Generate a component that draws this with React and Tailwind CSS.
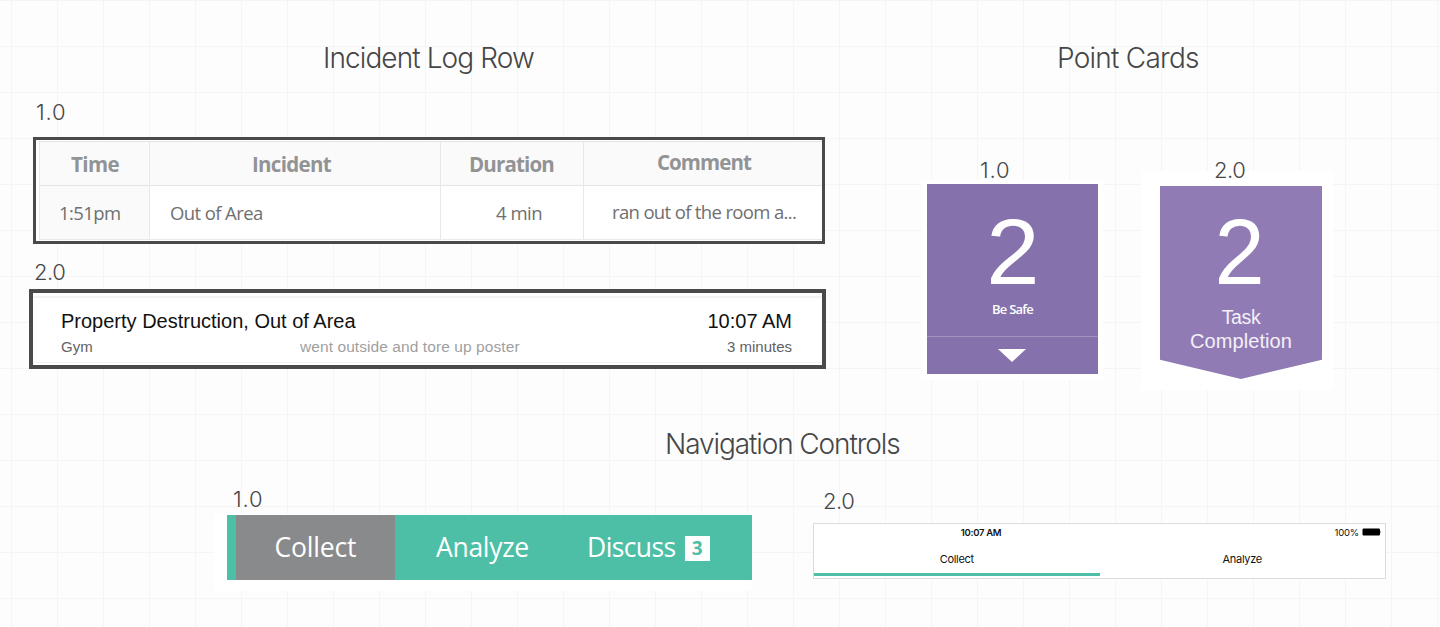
import { clsx } from "clsx";

function Title({ className, children }) {
  return (
    <h2 className={clsx("h-10 whitespace-nowrap font-['Inter',sans-serif] text-[28px] font-[350] leading-10 text-[#464647]", className)}>
      {children}
    </h2>
  );
}

function Version({ className, children }) {
  return (
    <p className={clsx("relative z-10 h-6 whitespace-nowrap font-['Inter',sans-serif] text-[22px] font-[350] leading-6 text-[#464647]", className)}>
      {children}
    </p>
  );
}

function HeaderCell({ className, children }) {
  return <div className={clsx("border-l border-[#e8e8e9] pt-px leading-[43px]", className)}>{children}</div>;
}

function IncidentTable() {
  return (
    <div className="ml-[33px] mt-[5px] h-[107px] w-[792px] border-[3px] border-[#4a4a4a] bg-white pl-[3px] pt-px font-['Open_Sans',sans-serif]">
      <div className="grid h-[45px] grid-cols-[110px_291px_143px_239px] whitespace-nowrap border-y border-[#e4e4e5] bg-[#fafafa] text-[20.5px] font-bold text-[#929395]">
        <HeaderCell className="pl-[31px] tracking-[-0.6px]">Time</HeaderCell>
        <HeaderCell className="pl-[102px] tracking-[-0.7px]">Incident</HeaderCell>
        <HeaderCell className="pl-[28px] tracking-[-0.85px]">Duration</HeaderCell>
        <HeaderCell className="pl-[73px] tracking-[-0.95px]">
          <span className="-mt-[2px] block">Comment</span>
        </HeaderCell>
      </div>
      <div className="grid h-[54px] grid-cols-[110px_291px_143px_239px] whitespace-nowrap border-b border-[#eaeaea] text-[18.5px] leading-[53px] text-[#6f6f71]">
        <div className="border-l border-[#e8e8e9] bg-[#fafafa] pl-[19px] tracking-[-0.6px]">1:51pm</div>
        <div className="border-l border-[#e8e8e9] pl-[20px] tracking-[-0.6px]">Out of Area</div>
        <div className="border-l border-[#e8e8e9] pl-[55px] tracking-[-0.5px]">4 min</div>
        <div className="border-l border-[#e8e8e9] pl-[28px] tracking-[-0.65px]">
          <span className="-mt-px block">ran out of the room a...</span>
        </div>
      </div>
    </div>
  );
}

function IncidentRow() {
  return (
    <div className="ml-[29px] mt-[5px] h-20 w-[797px] border-4 border-[#4a4a4a] bg-white pt-[3px] font-['Liberation_Sans',sans-serif]">
      <div className="h-[67px] whitespace-nowrap border-b border-t-2 border-b-[#f1f1f1] border-t-[#f3f3f3] pl-[28px] pr-[30px] pt-[11px]">
        <div className="flex h-[24px] justify-between text-[20px] leading-[24px] text-[#111111]">
          <span>Property Destruction, Out of Area</span>
          <span>10:07 AM</span>
        </div>
        <div className="grid grid-cols-[239px_1fr_auto] pt-[4px] text-[15px] leading-[20px] text-[#626264]">
          <span>Gym</span>
          <span className="text-[15.5px] tracking-[0.08px] text-[#9f9f9f]">went outside and tore up poster</span>
          <span>3 minutes</span>
        </div>
      </div>
    </div>
  );
}

function SafeCard() {
  return (
    <div className="mt-[-2px] flex h-[190px] w-[171px] flex-col items-center bg-[#8571ac] text-white shadow-[0_1px_0_5px_#ffffff]">
      <span className="mt-[28px] h-[80px] scale-x-[1.03] font-['Liberation_Sans',sans-serif] text-[93px] leading-[80px]">2</span>
      <span className="mt-[7px] h-5 font-['Open_Sans',sans-serif] text-[13px] font-semibold leading-5 tracking-[-0.75px]">Be Safe</span>
      <div className="mt-[17px] flex h-[38px] w-full justify-center border-t border-[#a193c0] pt-[12px]">
        <svg width="28" height="13" viewBox="0 0 28 13" className="mr-px fill-white">
          <path d="M0 0H28L14 13Z" />
        </svg>
      </div>
    </div>
  );
}

function TaskCard() {
  return (
    <div className="mt-[-12px] h-[219px] w-[192px] bg-white pl-[19px] pt-[15px]">
      <div className="flex h-[193px] w-[162px] flex-col items-center bg-[#917bb5] font-['Liberation_Sans',sans-serif] text-white [clip-path:polygon(0_0,100%_0,100%_90%,50%_100%,0_90%)]">
        <span className="mt-[26px] h-[80px] scale-x-[0.98] pr-[2px] text-[92px] leading-[80px]">2</span>
        <span className="mt-[13px] h-6 text-[19.5px] leading-6 tracking-[-0.4px] text-[#f4f0f8]">Task</span>
        <span className="h-6 text-[20px] leading-6 tracking-[0.1px] text-[#f4f0f8]">Completion</span>
      </div>
    </div>
  );
}

function OldNav() {
  return (
    <nav className="flex h-[65px] w-[525px] whitespace-nowrap bg-[#4cbfa6] pl-[9px] font-['Open_Sans',sans-serif] text-[26.5px] font-medium leading-[64px] text-white shadow-[-7px_5px_0_6px_#ffffff]">
      <div className="w-[159px] bg-[#898a8c] pl-[38.5px] tracking-[-0.2px]">Collect</div>
      <div className="w-[152px] pl-[41px] tracking-[-0.3px]">Analyze</div>
      <div className="flex items-start pl-[40px] tracking-[-0.6px]">
        Discuss
        <span className="ml-[9px] mt-[21px] flex h-[25px] w-[25px] justify-center bg-white text-[19px] font-bold leading-[24px] tracking-normal text-[#4cbfa6]">
          3
        </span>
      </div>
    </nav>
  );
}

function NewNav() {
  return (
    <nav className="h-14 w-[573px] border border-[#dcdcdc] bg-white font-['Inter',sans-serif] text-[#111111]">
      <div className="flex h-4 justify-between whitespace-nowrap pr-[3px] leading-4">
        <span className="w-[334px] pt-px text-center text-[9.5px] font-semibold tracking-[-0.3px]">10:07 AM</span>
        <span className="flex items-center gap-[3px] pt-px text-[9.5px] tracking-[-0.2px]">
          100%
          <svg width="20" height="8" viewBox="0 0 20 8" className="-mt-px">
            <rect x="0.5" y="0.5" width="17.5" height="7" rx="1.2" fill="#000" />
            <path d="M18.6 2.6Q19.8 4 18.6 5.4Z" fill="#000" />
          </svg>
        </span>
      </div>
      <div className="grid h-9 grid-cols-2 text-center text-[11px] leading-[28px] tracking-[-0.3px]">
        <span className="border-b-[3px] border-[#4cbfa6] pt-[5px]">Collect</span>
        <span className="pt-[5px]">Analyze</span>
      </div>
    </nav>
  );
}

export default function App() {
  return (
    <main className="flex h-[627px] w-[1440px] flex-col overflow-hidden bg-[#fdfdfd] bg-[linear-gradient(to_right,#f5f5f5_1px,transparent_1px),linear-gradient(to_bottom,#f5f5f5_1px,transparent_1px)] bg-[length:46px_46px] bg-[position:11px_0px]">
      <div className="flex h-[424px]">
        <section className="w-[850px] pt-[38px]">
          <Title className="pl-[323px] tracking-[-0.9px]">Incident Log Row</Title>
          <Version className="mt-[22px] pl-[36px] tracking-[0.8px]">1.0</Version>
          <div className="pt-[8px]">
            <IncidentTable />
          </div>
          <Version className="mt-[16px] pl-[34px] tracking-[-0.4px]">2.0</Version>
          <IncidentRow />
        </section>
        <section className="flex-1 pt-[38px]">
          <Title className="pl-[207px] tracking-[-0.75px]">Point Cards</Title>
          <div className="flex pl-[77px] pt-[80px]">
            <div className="w-[214px]">
              <Version className="pl-[53px] tracking-[0.8px]">1.0</Version>
              <div className="pt-[4px]">
                <SafeCard />
              </div>
            </div>
            <div>
              <Version className="pl-[73px] tracking-[-0.4px]">2.0</Version>
              <div className="pt-px">
                <TaskCard />
              </div>
            </div>
          </div>
        </section>
      </div>
      <section>
        <Title className="pl-[665px] tracking-[-1.1px]">Navigation Controls</Title>
        <div className="flex pl-[227px]">
          <div className="w-[586px] pt-[23px]">
            <Version className="pl-[6px] tracking-[0.8px]">1.0</Version>
            <div className="pt-[4px]">
              <OldNav />
            </div>
          </div>
          <div className="pt-[25px]">
            <Version className="pl-[10px] tracking-[-0.4px]">2.0</Version>
            <div className="pt-[10px]">
              <NewNav />
            </div>
          </div>
        </div>
      </section>
    </main>
  );
}
